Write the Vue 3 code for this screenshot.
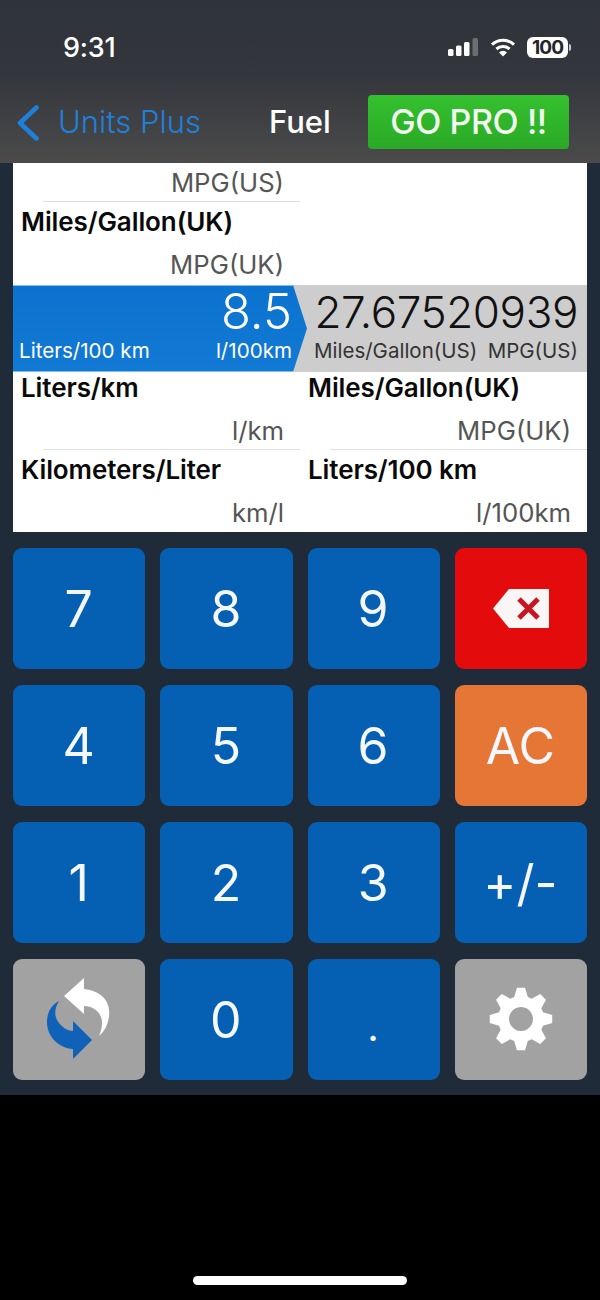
<script setup>
const sides = [
  [{ unit: 'MPG(US)', partial: true }, { name: 'Miles/Gallon(UK)', unit: 'MPG(UK)', plain: true }],
  [{ name: 'Liters/km', unit: 'l/km' }, { name: 'Kilometers/Liter', unit: 'km/l', plain: true }],
  [{ name: 'Miles/Gallon(UK)', unit: 'MPG(UK)' }, { name: 'Liters/100 km', unit: 'l/100km', plain: true }]
]
const keys = [
  { t: '7' }, { t: '8' }, { t: '9' }, { icon: 'back', c: 'red' },
  { t: '4' }, { t: '5' }, { t: '6' }, { t: 'AC', c: 'orange' },
  { t: '1' }, { t: '2' }, { t: '3' }, { t: '+/-' },
  { icon: 'swap', c: 'gray' }, { t: '0' }, { t: '.' , c: 'dot' }, { icon: 'gear', c: 'gray' }
]
const gear = (() => {
  const cx = 32, cy = 32, teeth = 8
  const pts = []
  for (let i = 0; i < teeth; i++) {
    const a = (i * 2 * Math.PI) / teeth - Math.PI / 2
    const p = (r, d) => {
      const b = a + d
      pts.push(`${(cx + r * Math.cos(b)).toFixed(2)} ${(cy + r * Math.sin(b)).toFixed(2)}`)
    }
    p(23, -0.3); p(31.5, -0.13); p(31.5, 0.13); p(23, 0.3)
  }
  return `M${pts.join('L')}Z M32 20a12 12 0 1 0 .01 0Z`
})()
</script>

<template>
  <div class="screen">
    <header class="top">
      <div class="status">
        <span class="time">9:31</span>
        <div class="sys">
          <svg width="31" height="18" viewBox="0 0 31 18">
            <rect x="0" y="11" width="5.5" height="7" rx="1.5" fill="#fff" />
            <rect x="8" y="7.5" width="5.5" height="10.5" rx="1.5" fill="#fff" />
            <rect x="16" y="4" width="5.5" height="14" rx="1.5" fill="#fff" />
            <rect x="24.5" y="0" width="5.5" height="18" rx="1.5" fill="#6c6e71" />
          </svg>
          <svg width="26" height="19" viewBox="0 0 26 19">
            <path d="M2 6.6a16 16 0 0 1 22 0" fill="none" stroke="#fff" stroke-width="3" />
            <path d="M6.4 11a10 10 0 0 1 13.2 0" fill="none" stroke="#fff" stroke-width="3" />
            <path d="M9 14.4a5.5 5.5 0 0 1 8 0L13 18.6Z" fill="#fff" />
          </svg>
          <div class="batt"><span>100</span></div>
        </div>
      </div>
      <nav class="nav">
        <svg class="chev" width="24" height="36" viewBox="0 0 24 36">
          <path d="M20.5 2.5L4 18l16.5 15.5" fill="none" stroke="#1f80dc" stroke-width="4.6" stroke-linecap="round" stroke-linejoin="round" />
        </svg>
        <span class="back">Units Plus</span>
        <span class="title">Fuel</span>
        <button class="pro">GO PRO !!</button>
      </nav>
    </header>

    <main class="body">
      <section class="table">
        <div class="upper">
          <div class="col">
            <div v-for="r in sides[0]" :key="r.unit" class="row" :class="{ partial: r.partial, plain: r.plain }">
              <div v-if="r.name" class="name">{{ r.name }}</div>
              <div class="unit">{{ r.unit }}</div>
            </div>
          </div>
          <div class="col"></div>
        </div>
        <div class="band">
          <div class="from">
            <div class="val">8.5</div>
            <div class="sub"><span>Liters/100 km</span><span>l/100km</span></div>
          </div>
          <div class="to">
            <div class="val">27.67520939</div>
            <div class="sub"><span>Miles/Gallon(US)</span><span>MPG(US)</span></div>
          </div>
        </div>
        <div class="lower">
          <div v-for="(side, i) in [sides[1], sides[2]]" :key="i" class="col">
            <div v-for="r in side" :key="r.unit" class="row" :class="{ plain: r.plain }">
              <div class="name">{{ r.name }}</div>
              <div class="unit">{{ r.unit }}</div>
            </div>
          </div>
        </div>
      </section>

      <section class="pad">
        <button v-for="(k, i) in keys" :key="i" class="key" :class="k.c">
          <span v-if="k.t" class="label">{{ k.t }}</span>
          <svg v-else-if="k.icon === 'back'" width="56" height="39" viewBox="0 0 56 39">
            <path d="M0 19.5L16 0H56V39H16Z" fill="#fbf6f6" />
            <path d="M26 10l19 19M45 10L26 29" stroke="#c8151f" stroke-width="5" fill="none" />
          </svg>
          <svg v-else-if="k.icon === 'swap'" width="80" height="90" viewBox="40 975 80 90">
            <path d="M65 997L85 979V990C103 992 112 1003 110 1017C109 1026 105 1033 100 1037C103 1030 104 1023 102 1018C99 1011 93 1007 85 1007V1015Z" fill="#fff" />
            <path d="M93 1041L74 1060V1050C60 1049 48 1038 48 1023C48 1014 52 1006 60 1002C55 1010 55 1018 60 1024C64 1029 69 1032 74 1032V1022Z" fill="#0f62b8" />
          </svg>
          <svg v-else-if="k.icon === 'gear'" width="64" height="64" viewBox="0 0 64 64">
            <path :d="gear" fill="#fff" fill-rule="evenodd" />
          </svg>
        </button>
      </section>
    </main>

    <footer class="foot"><span class="home"></span></footer>
  </div>
</template>

<style>
html, body { margin: 0; background: #000; }
</style>

<style scoped>
.screen {
  width: 600px;
  height: 1300px;
  display: flex;
  flex-direction: column;
  background: #000;
  font-family: Inter, "Liberation Sans", sans-serif;
  overflow: hidden;
}
.top {
  height: 163px;
  flex: none;
  background: linear-gradient(#2f333a, #33363c 45%, #4b4b4b);
  color: #fff;
}
.status {
  height: 95px;
  box-sizing: border-box;
  padding: 31px 30px 0 63px;
  display: flex;
  justify-content: space-between;
  align-items: flex-start;
}
.time { font-size: 27px; line-height: 34px; font-weight: 500; letter-spacing: -0.2px; }
.sys { display: flex; align-items: center; gap: 11px; height: 34px; margin-top: -1px; }
.batt {
  position: relative;
  width: 41px;
  height: 21px;
  margin-right: 2px;
  background: #fff;
  border-radius: 6px;
  display: flex;
  align-items: center;
  justify-content: center;
}
.batt::after {
  content: "";
  position: absolute;
  right: -3px;
  top: 7px;
  width: 2px;
  height: 7px;
  border-radius: 0 2px 2px 0;
  background: #c9c9c9;
}
.batt span { font-size: 19px; font-weight: 700; color: #22262b; letter-spacing: -0.9px; }
.nav {
  height: 54px;
  display: flex;
  align-items: center;
  padding: 0 31px 0 16px;
}
.chev { flex: none; margin-top: 2px; }
.back { margin-left: 18px; width: 211px; font-size: 31px; color: #1f80dc; font-weight: 300; white-space: nowrap; margin-top: -2px; }
.title { width: 99px; font-size: 31px; font-weight: 500; white-space: nowrap; margin-top: -2px; }
.pro {
  width: 201px;
  height: 54px;
  padding: 0 0 2px;
  border: 0;
  border-radius: 4px;
  background: linear-gradient(#35c12f, #2aa926);
  color: #f2fbf0;
  font: 500 34px Inter, "Liberation Sans", sans-serif;
  letter-spacing: -0.4px;
}
.body {
  height: 932px;
  flex: none;
  box-sizing: border-box;
  padding: 0 13px;
  background: #1f2b38;
}
.table { height: 369px; background: #fff; overflow: hidden; }
.upper { height: 122px; display: grid; grid-template-columns: 1fr 1fr; }
.lower { height: 160px; display: grid; grid-template-columns: 1fr 1fr; }
.row {
  height: 78px;
  box-sizing: border-box;
  padding: 0 16px 0 8px;
  position: relative;
}
.col { min-width: 0; }
.row .unit { margin-top: 11px; }
.lower .row.plain { height: 82px; padding-top: 4px; }
.upper .row.plain { height: 83px; padding-top: 4px; }
.row.partial { height: 39px; padding-top: 4px; margin-left: 30px; padding-left: 0; border-bottom: 1px solid #dcdcdc; }
.row.partial .unit { margin-top: 0; }
.lower .row:first-child::after {
  content: "";
  position: absolute;
  left: 30px;
  right: 0;
  bottom: 0;
  height: 1px;
  background: #e1e1e1;
}
.name { font-size: 26px; line-height: 32px; font-weight: 600; color: #0a0a0a; white-space: nowrap; letter-spacing: -0.1px; }
.unit { font-size: 25.7px; line-height: 32px; color: #555; text-align: right; white-space: nowrap; }
.band {
  height: 87px;
  display: grid;
  grid-template-columns: 280px 1fr;
  background: #cdcdcd;
}
.from {
  margin-right: -14px;
  position: relative;
  padding: 0 15px 0 6px;
  background: linear-gradient(#0b73cf, #1279d4);
  box-shadow: inset 0 1px #7fc0f0, inset 0 -1px #7fc0f0;
  color: #fff;
  clip-path: polygon(0 0, 280px 0, 100% 50%, 280px 100%, 0 100%);
  box-sizing: border-box;
}
.to { padding: 0 9px 0 21px; color: #111; min-width: 0; }
.val { text-align: right; white-space: nowrap; font-weight: 300; line-height: 50px; margin-top: 2px; }
.from .val { font-size: 49px; }
.to .val { font-size: 44px; letter-spacing: -0.4px; }
.sub { display: flex; justify-content: space-between; font-size: 20.6px; line-height: 26px; white-space: nowrap; margin-top: 1px; }
.to .sub { color: #333; font-size: 20.5px; }
.pad {
  margin-top: 15.5px;
  display: grid;
  grid-template-columns: repeat(4, 132.25px);
  grid-auto-rows: 121.5px;
  gap: 15.5px 15px;
}
.key {
  border: 0;
  padding: 0;
  border-radius: 9px;
  background: #0560b3;
  color: #f4f7fb;
  font: 400 50px Inter, "Liberation Sans", sans-serif;
  display: flex;
  align-items: center;
  justify-content: center;
}
.label { margin-top: 1px; margin-right: 1px; }
.key.red { background: #e30b0b; }
.key.orange { background: #e67635; }
.key.gray { background: #a2a2a2; }
.key.dot { font-size: 40px; padding-top: 14px; }
.foot {
  flex: 1;
  display: flex;
  justify-content: center;
  align-items: flex-end;
  padding-bottom: 15px;
}
.home { width: 214px; height: 9px; border-radius: 5px; background: #fff; }
</style>
